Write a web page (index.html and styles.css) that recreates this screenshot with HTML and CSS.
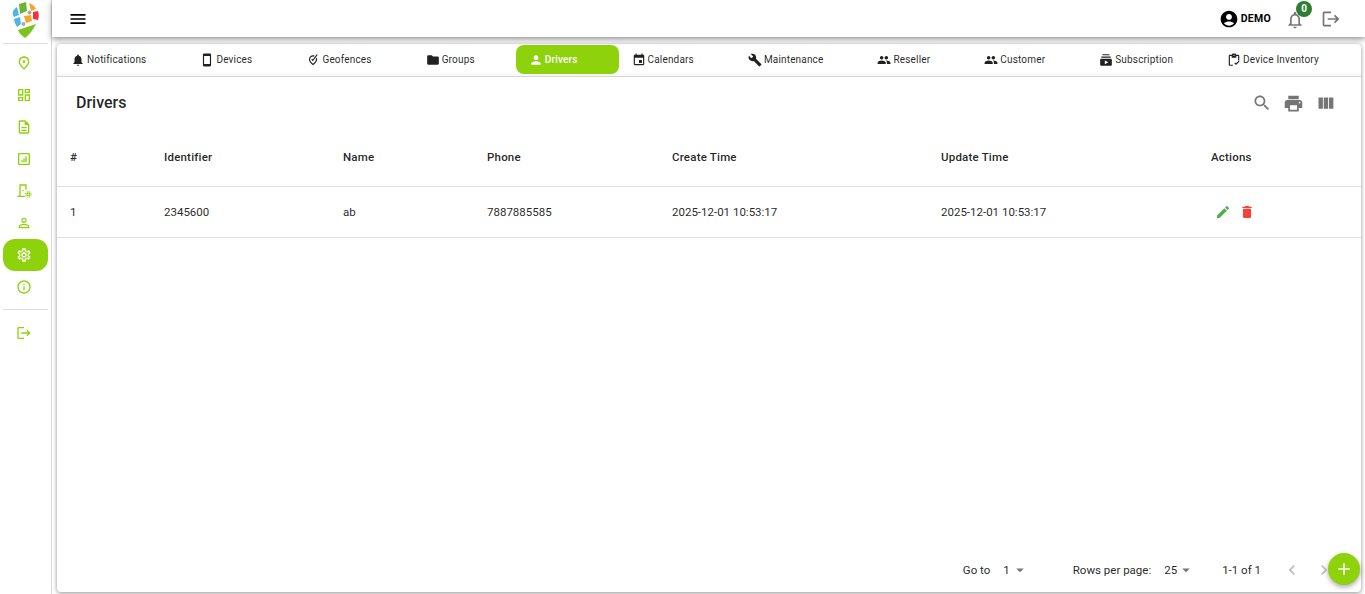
FILE: index.html
```html
<!DOCTYPE html>
<html lang="en">
<head>
<meta charset="utf-8">
<title>Drivers</title>
<link rel="stylesheet" href="styles.css">
</head>
<body>
<div class="app">
  <aside class="sidebar">
    <div class="logo">
      <svg class="logo-svg" viewBox="3 0 45 43">
        <path fill="#4db6e8" d="M17 7l2 8-5 2c-2-3-2-7 3-10z"/>
        <path fill="#6cb52d" d="M19 4l7-2 1 9-7 3z"/>
        <path fill="#f5a623" d="M29 3c3 1 6 3 7 6l-5 2z"/>
        <path fill="#f0333c" d="M33 12l5-1c1 3 1 6 0 9l-5-1z"/>
        <path fill="#f5a623" d="M24 16l7-1 1 6-6 2z"/>
        <path fill="#4db6e8" d="M14 19l6-2 1 7-4 3c-1-2-3-5-3-8z"/>
        <circle fill="#a8a8a8" cx="29.500" cy="12.500" r="2"/>
        <circle fill="#a8a8a8" cx="23.500" cy="24" r="2"/>
        <path fill="#7fc41c" d="M18 30l18-6c-3 6-7 11-11 14-3-2-6-5-7-8z"/>
      </svg>
    </div>
    <nav class="nav">
      <a class="nav-item"><svg class="ico-nav" viewBox="0 0 24 24"><path d="M12 12c-1.100 0-2-.9-2-2s.9-2 2-2 2 .9 2 2-.9 2-2 2zm6-1.800C18 6.570 15.350 4 12 4s-6 2.570-6 6.200c0 2.340 1.950 5.440 6 9.140 4.050-3.700 6-6.800 6-9.140zM12 2c4.200 0 8 3.220 8 8.200 0 3.320-2.670 7.250-8 11.800-5.330-4.550-8-8.480-8-11.800C4 5.220 7.800 2 12 2z"/></svg></a>
      <a class="nav-item"><svg class="ico-nav" viewBox="0 0 24 24"><path d="M19 5v2h-4V5h4M9 5v6H5V5h4m10 8v6h-4v-6h4M9 17v2H5v-2h4M21 3h-8v6h8V3zM11 3H3v10h8V3zm10 8h-8v10h8V11zm-10 4H3v6h8v-6z"/></svg></a>
      <a class="nav-item"><svg class="ico-nav" viewBox="0 0 24 24"><path d="M8 16h8v2H8zm0-4h8v2H8zm6-10H6c-1.100 0-2 .9-2 2v16c0 1.100.89 2 1.990 2H18c1.100 0 2-.9 2-2V8l-6-6zm4 18H6V4h7v5h5v11z"/></svg></a>
      <a class="nav-item"><svg class="ico-nav" viewBox="0 0 24 24"><path d="M19 3H5c-1.100 0-2 .9-2 2v14c0 1.100.9 2 2 2h14c1.100 0 2-.9 2-2V5c0-1.100-.9-2-2-2zm0 16H5V5h14v14zM8 14h2v3H8zm3-3h2v6h-2zm3-3h2v9h-2z"/></svg></a>
      <a class="nav-item"><svg class="ico-nav" viewBox="0 0 24 24"><path d="M5 2h11v8h-2V4H7v15h6v2H2v-2h3zM9.500 10.500h2v2h-2z"/><circle cx="18.500" cy="17" r="2.200" fill="none" stroke="currentColor" stroke-width="1.600"/><circle cx="18.500" cy="17" r="4.200" fill="none" stroke="currentColor" stroke-width="1.600" stroke-dasharray="1.650 1.650"/></svg></a>
      <a class="nav-item"><svg class="ico-nav" viewBox="0 0 24 24"><path d="M12 5.900c1.160 0 2.100.94 2.100 2.100s-.94 2.100-2.100 2.100S9.900 9.160 9.900 8s.94-2.100 2.100-2.100m0 9c2.970 0 6.100 1.460 6.100 2.100v1.100H5.900V17c0-.64 3.130-2.100 6.100-2.100M12 4C9.790 4 8 5.790 8 8s1.790 4 4 4 4-1.790 4-4-1.790-4-4-4zm0 9c-2.670 0-8 1.340-8 4v3h16v-3c0-2.660-5.330-4-8-4z"/></svg></a>
      <a class="nav-item nav-active"><svg class="ico-nav" viewBox="0 0 24 24"><path d="M19.430 12.980c.04-.32.07-.64.07-.98 0-.34-.03-.66-.07-.98l2.110-1.650c.19-.15.24-.42.12-.64l-2-3.460c-.09-.16-.26-.25-.44-.25-.06 0-.12.01-.17.03l-2.490 1c-.52-.4-1.080-.73-1.690-.98l-.38-2.650C14.460 2.180 14.250 2 14 2h-4c-.25 0-.46.18-.49.42l-.38 2.650c-.61.25-1.170.59-1.690.98l-2.490-1c-.06-.02-.12-.03-.18-.03-.17 0-.34.09-.43.25l-2 3.460c-.13.22-.07.49.12.64l2.110 1.650c-.04.32-.07.65-.07.98 0 .33.03.66.07.98l-2.110 1.650c-.19.15-.24.42-.12.64l2 3.460c.09.16.26.25.44.25.06 0 .12-.01.17-.03l2.490-1c.52.4 1.080.73 1.690.98l.38 2.650c.03.24.24.42.49.42h4c.25 0 .46-.18.49-.42l.38-2.650c.61-.25 1.170-.59 1.690-.98l2.490 1c.06.02.12.03.18.03.17 0 .34-.09.43-.25l2-3.460c.12-.22.07-.49-.12-.64l-2.110-1.650zm-1.980-1.710c.04.31.05.52.05.73 0 .21-.02.43-.05.73l-.14 1.130.89.7 1.080.84-.7 1.210-1.270-.51-1.040-.42-.9.68c-.43.32-.84.56-1.250.73l-1.060.43-.16 1.130-.2 1.350h-1.400l-.19-1.350-.16-1.130-1.060-.43c-.43-.18-.83-.41-1.230-.71l-.91-.7-1.060.43-1.270.51-.7-1.210 1.080-.84.89-.7-.14-1.130c-.03-.31-.05-.54-.05-.74s.02-.43.05-.73l.14-1.130-.89-.7-1.080-.84.7-1.210 1.270.51 1.040.42.9-.68c.43-.32.84-.56 1.250-.73l1.060-.43.16-1.130.2-1.350h1.390l.19 1.350.16 1.130 1.060.43c.43.18.83.41 1.230.71l.91.7 1.060-.43 1.270-.51.7 1.210-1.070.85-.89.7.14 1.130zM12 8c-2.210 0-4 1.790-4 4s1.790 4 4 4 4-1.790 4-4-1.790-4-4-4zm0 6c-1.100 0-2-.9-2-2s.9-2 2-2 2 .9 2 2-.9 2-2 2z"/></svg></a>
      <a class="nav-item"><svg class="ico-nav" viewBox="0 0 24 24"><path d="M11 7h2v2h-2zm0 4h2v6h-2zm1-9C6.480 2 2 6.480 2 12s4.480 10 10 10 10-4.480 10-10S17.520 2 12 2zm0 18c-4.410 0-8-3.590-8-8s3.590-8 8-8 8 3.590 8 8-3.590 8-8 8z"/></svg></a>
      <div class="nav-divider"></div>
      <a class="nav-item"><svg class="ico-nav" viewBox="0 0 24 24"><path d="M17 7l-1.410 1.410L18.170 11H8v2h10.170l-2.580 2.580L17 17l5-5zM4 5h8V3H4c-1.100 0-2 .9-2 2v14c0 1.100.9 2 2 2h8v-2H4V5z"/></svg></a>
    </nav>
  </aside>

  <div class="main">
    <header class="topbar">
      <svg class="ico-20 ico-black" viewBox="0 0 24 24"><path d="M3 18h18v-2H3v2zm0-5h18v-2H3v2zm0-7v2h18V6H3z"/></svg>
      <div class="top-right">
        <div class="user">
          <svg class="ico-20 ico-black" viewBox="0 0 24 24"><path d="M12 2C6.480 2 2 6.480 2 12s4.480 10 10 10 10-4.480 10-10S17.520 2 12 2zm0 4c1.930 0 3.500 1.570 3.500 3.500S13.930 13 12 13s-3.500-1.570-3.500-3.500S10.070 6 12 6zm0 14c-2.030 0-4.430-.82-6.140-2.880C7.550 15.800 9.680 15 12 15s4.450.8 6.140 2.120C16.430 19.180 14.030 20 12 20z"/></svg>
          <span class="user-name">DEMO</span>
        </div>
        <div class="bell">
          <svg class="ico-20 ico-gray" viewBox="0 0 24 24"><path d="M12 22c1.100 0 2-.9 2-2h-4c0 1.100.9 2 2 2zm6-6v-5c0-3.070-1.630-5.640-4.500-6.320V4c0-.83-.67-1.500-1.500-1.500s-1.500.67-1.500 1.500v.68C7.640 5.360 6 7.920 6 11v5l-2 2v1h16v-1l-2-2zm-2 1H8v-6c0-2.480 1.510-4.500 4-4.500s4 2.020 4 4.500v6z"/></svg>
          <span class="badge">0</span>
        </div>
        <svg class="ico-20 ico-gray" viewBox="0 0 24 24"><path d="M17 7l-1.410 1.410L18.170 11H8v2h10.170l-2.580 2.580L17 17l5-5zM4 5h8V3H4c-1.100 0-2 .9-2 2v14c0 1.100.9 2 2 2h8v-2H4V5z"/></svg>
      </div>
    </header>

    <main class="content">
      <section class="card">
        <div class="tabs">
          <a class="tab"><svg class="ico-tab" viewBox="0 0 24 24"><path d="M12 22c1.100 0 2-.9 2-2h-4c0 1.100.89 2 2 2zm6-6v-5c0-3.070-1.640-5.640-4.500-6.320V4c0-.83-.67-1.500-1.500-1.500s-1.500.67-1.500 1.500v.68C7.630 5.360 6 7.920 6 11v5l-2 2v1h16v-1l-2-2z"/></svg>Notifications</a>
          <a class="tab"><svg class="ico-tab" viewBox="0 0 24 24"><path d="M17 1.010L7 1c-1.100 0-2 .9-2 2v18c0 1.100.9 2 2 2h10c1.100 0 2-.9 2-2V3c0-1.100-.9-1.990-2-1.990zM17 19H7V5h10v14z"/></svg>Devices</a>
          <a class="tab"><svg class="ico-tab" viewBox="0 0 24 24"><path d="M12 4c1.100 0 2.100.3 3 .8l-1.300 1.700c-.5-.3-1.100-.4-1.700-.4-2.400 0-5 1.900-5 5 0 1.900 1.600 4.300 5 7.500 3.400-3.200 5-5.600 5-7.500 0-.5-.1-1-.2-1.400l1.500-2c.5 1 .8 2.100.8 3.400 0 2.800-2.400 6.100-7 10C7.400 17.200 5 13.900 5 11.100 5 6.800 8.300 4 12 4z"/><path d="M11.800 14.200L9 11.400l1.400-1.400 1.300 1.300L18.500 2l1.600 1.200z"/></svg>Geofences</a>
          <a class="tab"><svg class="ico-tab" viewBox="0 0 24 24"><path d="M10 4H4c-1.100 0-1.990.9-1.990 2L2 18c0 1.100.9 2 2 2h16c1.100 0 2-.9 2-2V8c0-1.100-.9-2-2-2h-8l-2-2z"/></svg>Groups</a>
          <a class="tab tab-active"><svg class="ico-tab" viewBox="0 0 24 24"><path d="M12 12c2.210 0 4-1.790 4-4s-1.790-4-4-4-4 1.790-4 4 1.790 4 4 4zm0 2c-2.670 0-8 1.340-8 4v2h16v-2c0-2.660-5.330-4-8-4z"/></svg>Drivers</a>
          <a class="tab"><svg class="ico-tab" viewBox="0 0 24 24"><path d="M17 12h-5v5h5v-5zM16 1v2H8V1H6v2H5c-1.110 0-1.990.9-1.990 2L3 19c0 1.100.89 2 2 2h14c1.100 0 2-.9 2-2V5c0-1.100-.9-2-2-2h-1V1h-2zm3 18H5V8h14v11z"/></svg>Calendars</a>
          <a class="tab"><svg class="ico-tab" viewBox="0 0 24 24"><path d="M22.700 19l-9.100-9.100c.9-2.300.4-5-1.500-6.900-2-2-5-2.400-7.400-1.300L9 6 6 9 1.600 4.700C.4 7.100.9 10.100 2.900 12.100c1.900 1.900 4.600 2.400 6.900 1.500l9.100 9.100c.4.4 1 .4 1.400 0l2.300-2.300c.5-.4.5-1.100.1-1.400z"/></svg>Maintenance</a>
          <a class="tab"><svg class="ico-tab" viewBox="0 0 24 24"><path d="M16 11c1.660 0 2.990-1.340 2.990-3S17.660 5 16 5c-1.660 0-3 1.340-3 3s1.340 3 3 3zm-8 0c1.660 0 2.990-1.340 2.990-3S9.660 5 8 5C6.340 5 5 6.340 5 8s1.340 3 3 3zm0 2c-2.330 0-7 1.170-7 3.500V19h14v-2.500c0-2.330-4.670-3.500-7-3.500zm8 0c-.29 0-.62.02-.97.05 1.160.84 1.970 1.970 1.970 3.450V19h6v-2.500c0-2.330-4.670-3.500-7-3.500z"/></svg>Reseller</a>
          <a class="tab"><svg class="ico-tab" viewBox="0 0 24 24"><path d="M16 11c1.660 0 2.990-1.340 2.990-3S17.660 5 16 5c-1.660 0-3 1.340-3 3s1.340 3 3 3zm-8 0c1.660 0 2.990-1.340 2.990-3S9.660 5 8 5C6.340 5 5 6.340 5 8s1.340 3 3 3zm0 2c-2.330 0-7 1.170-7 3.500V19h14v-2.500c0-2.330-4.670-3.500-7-3.500zm8 0c-.29 0-.62.02-.97.05 1.160.84 1.970 1.970 1.970 3.450V19h6v-2.500c0-2.330-4.670-3.500-7-3.500z"/></svg>Customer</a>
          <a class="tab"><svg class="ico-tab" viewBox="0 0 24 24"><path d="M20 8H4V6h16v2zm-2-6H6v2h12V2zm4 10v8c0 1.100-.9 2-2 2H4c-1.100 0-2-.9-2-2v-8c0-1.100.9-2 2-2h16c1.100 0 2 .9 2 2zm-6 4l-6-3.270v6.530L16 16z"/></svg>Subscription</a>
          <a class="tab"><svg class="ico-tab" viewBox="0 0 24 24"><path d="M19 3h-3.200C15.400 1.800 14.300 1 13 1h-2c-1.300 0-2.400.8-2.800 2H5c-1.100 0-2 .9-2 2v15c0 1.100.9 2 2 2h5v-2H5V5h3v3h8V5h3v8h2V5c0-1.100-.9-2-2-2zm-7 2a1 1 0 110-2 1 1 0 010 2zM15.500 20.500L12.500 17.500l1.400-1.400 1.600 1.600 4.600-4.600 1.400 1.400z"/></svg>Device Inventory</a>
        </div>

        <div class="title-row">
          <h1 class="title">Drivers</h1>
          <div class="tools">
            <svg class="ico-tool ico-search" viewBox="0 0 24 24"><path d="M15.500 14h-.79l-.28-.27C15.410 12.590 16 11.110 16 9.500 16 5.910 13.090 3 9.500 3S3 5.910 3 9.500 5.910 16 9.500 16c1.610 0 3.090-.59 4.230-1.570l.27.28v.79l5 4.990L20.490 19l-4.990-5zm-6 0C7.010 14 5 11.990 5 9.500S7.010 5 9.500 5 14 7.010 14 9.500 11.990 14 9.500 14z"/></svg>
            <svg class="ico-tool" viewBox="0 0 24 24"><path d="M19 8H5c-1.660 0-3 1.340-3 3v6h4v4h12v-4h4v-6c0-1.660-1.340-3-3-3zm-3 11H8v-5h8v5zm3-7c-.55 0-1-.45-1-1s.45-1 1-1 1 .45 1 1-.45 1-1 1zm-1-9H6v4h12V3z"/></svg>
            <svg class="ico-tool" viewBox="0 0 24 24"><path d="M10 18h5V5h-5v13zm-6 0h5V5H4v13zM16 5v13h5V5h-5z"/></svg>
          </div>
        </div>

        <div class="table">
          <div class="row row-head">
            <div class="cell">#</div>
            <div class="cell">Identifier</div>
            <div class="cell">Name</div>
            <div class="cell">Phone</div>
            <div class="cell">Create Time</div>
            <div class="cell">Update Time</div>
            <div class="cell">Actions</div>
          </div>
          <div class="row row-body">
            <div class="cell">1</div>
            <div class="cell">2345600</div>
            <div class="cell">ab</div>
            <div class="cell">7887885585</div>
            <div class="cell">2025-12-01 10:53:17</div>
            <div class="cell">2025-12-01 10:53:17</div>
            <div class="cell cell-actions">
              <svg class="ico-action ico-edit" viewBox="0 0 24 24"><path d="M3 17.250V21h3.750L17.810 9.940l-3.750-3.750L3 17.250zM20.710 7.040c.39-.39.39-1.020 0-1.410l-2.340-2.340c-.39-.39-1.020-.39-1.410 0l-1.830 1.830 3.750 3.750 1.830-1.830z"/></svg>
              <svg class="ico-action ico-delete" viewBox="0 0 24 24"><path d="M6 19c0 1.100.9 2 2 2h8c1.100 0 2-.9 2-2V7H6v12zM19 4h-3.500l-1-1h-5l-1 1H5v2h14V4z"/></svg>
            </div>
          </div>
        </div>

        <footer class="pager">
          <span class="pager-label">Go to</span>
          <span class="pager-select pager-go">1<svg class="ico-arrow" viewBox="0 0 24 24"><path d="M7 10l5 5 5-5z"/></svg></span>
          <span class="pager-label pager-rows">Rows per page:</span>
          <span class="pager-select pager-size">25<svg class="ico-arrow" viewBox="0 0 24 24"><path d="M7 10l5 5 5-5z"/></svg></span>
          <span class="pager-label pager-range">1-1 of 1</span>
          <svg class="ico-chevron ico-prev" viewBox="0 0 24 24"><path d="M15.410 7.410L14 6l-6 6 6 6 1.410-1.410L10.830 12z"/></svg>
          <svg class="ico-chevron ico-next" viewBox="0 0 24 24"><path d="M10 6L8.590 7.410 13.170 12l-4.580 4.590L10 18l6-6z"/></svg>
        </footer>
        <button class="fab" type="button"><svg class="ico-20 ico-white" viewBox="0 0 24 24"><path d="M19 13h-6v6h-2v-6H5v-2h6V5h2v6h6v2z"/></svg></button>
      </section>
    </main>
  </div>
</div>
</body>
</html>
```

FILE: styles.css
```css
* { box-sizing: border-box; }
html, body { margin: 0; height: 100%; overflow: hidden; }
body { font-family: Roboto, "Liberation Sans", sans-serif; color: rgba(0, 0, 0, 0.87); background: #fff; }
svg { display: block; flex: none; fill: currentColor; }

.app { display: flex; height: 594px; }

.sidebar { width: 52px; flex: none; background: #fff; border-right: 1px solid #d9d9d9; padding: 0 3px; }
.logo { height: 44px; border-bottom: 1px solid #dcdcdc; }
.logo-svg { width: 45px; height: 43px; }
.nav { padding-top: 3px; display: flex; flex-direction: column; }
.nav-item { height: 32px; display: flex; align-items: center; justify-content: center; padding-right: 3px; color: #8ed20b; border-radius: 12px; }
.nav-active { background: #8ed20b; color: #fff; }
.nav-divider { height: 1px; background: #dcdcdc; margin: 6px 0 7px; }

.ico-nav { width: 16px; height: 16px; }
.ico-20 { width: 20px; height: 20px; }
.ico-black { color: #000; }
.ico-gray { color: #757575; }
.ico-white { color: #fff; }

.main { flex: 1; min-width: 0; display: flex; flex-direction: column; }

.topbar { height: 37px; flex: none; background: #fff; display: flex; align-items: center; justify-content: space-between; padding: 0 24px 0 16px; box-shadow: 0 2px 6px rgba(0, 0, 0, 0.45); position: relative; z-index: 2; }
.top-right { display: flex; align-items: center; }
.user { display: flex; align-items: center; gap: 2px; }
.user-name { font-size: 10.5px; font-weight: 700; color: #000; letter-spacing: 0.3px; }
.bell { position: relative; margin: 2px 16px 0 14px; }
.badge { position: absolute; top: -9px; right: -7px; width: 16px; height: 16px; border-radius: 50%; background: #2e7d32; color: #fff; font-size: 10px; font-weight: 700; display: flex; align-items: center; justify-content: center; }

.content { flex: 1; min-height: 0; padding: 7px 4px 2px 5px; }
.card { position: relative; height: 100%; background: #fff; border-radius: 4px; box-shadow: 0 1px 4px rgba(0, 0, 0, 0.45); display: flex; flex-direction: column; }

.tabs { height: 33px; flex: none; display: flex; align-items: flex-start; padding: 1px 0 0 1px; border-bottom: 1px solid #d6d6d6; box-shadow: inset 0 -6px 6px -6px rgba(0, 0, 0, 0.08); }
.tab { height: 29px; display: flex; align-items: center; gap: 2px; padding: 0 41px 0 13px; font-size: 10px; letter-spacing: 0.17px; color: rgba(0, 0, 0, 0.87); border-radius: 8px; white-space: nowrap; }
.tab-active { background: #8ed20b; color: #fff; font-weight: 500; }
.ico-tab { width: 14px; height: 14px; }

.title-row { height: 52px; flex: none; display: flex; align-items: center; justify-content: space-between; padding: 0 25px 0 19px; }
.title { margin: 0; font-size: 16px; font-weight: 500; line-height: 1; }
.tools { display: flex; align-items: center; gap: 11px; }
.ico-tool { width: 21px; height: 21px; color: #757575; }
.ico-search { width: 20px; height: 20px; }

.table { flex: none; font-size: 11.5px; }
.row { display: grid; grid-template-columns: 94px 179px 144px 185px 269px 270px 1fr; align-items: center; border-bottom: 1px solid #e0e0e0; }
.row-head { height: 58px; font-weight: 500; padding-bottom: 2px; }
.row-head .cell { letter-spacing: 0.2px; }
.row-body { height: 51px; }
.cell { padding-left: 13px; }
.cell-actions { display: flex; gap: 8px; padding-left: 17px; }
.ico-action { width: 16px; height: 16px; }
.ico-edit { color: #4caf50; }
.ico-delete { color: #f44336; }

.pager { margin-top: auto; height: 44px; flex: none; display: flex; align-items: center; justify-content: flex-end; font-size: 11.5px; padding-right: 27px; }
.pager-select { display: flex; align-items: center; }
.pager-go { margin-left: 13px; gap: 1px; }
.pager-rows { margin-left: 44px; }
.pager-size { margin-left: 13px; }
.pager-range { margin-left: 27px; }
.ico-arrow { width: 18px; height: 18px; color: #757575; }
.ico-chevron { width: 20px; height: 20px; color: #bdbdbd; }
.ico-prev { margin-left: 21px; }
.ico-next { margin-left: 12px; }

.fab { position: absolute; right: 1px; bottom: 7px; width: 32px; height: 32px; border: 0; padding: 0; border-radius: 50%; background: #8ed20b; display: flex; align-items: center; justify-content: center; box-shadow: 0 2px 5px rgba(0, 0, 0, 0.35); }
```
